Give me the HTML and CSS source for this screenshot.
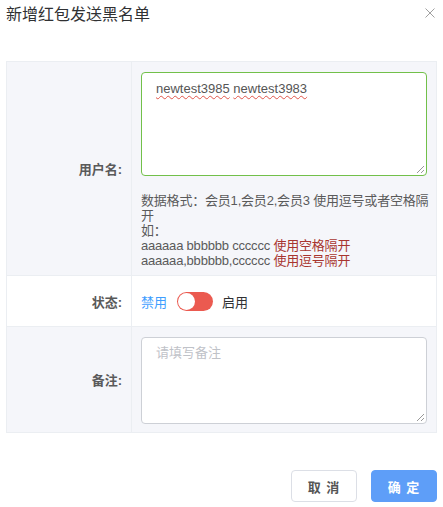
FILE: index.html
```html
<!DOCTYPE html>
<html lang="zh">
<head>
<meta charset="utf-8">
<link rel="stylesheet" href="styles.css">
</head>
<body>
<div class="dialog">
  <div class="header">
    <span class="title">新增红包发送黑名单</span>
    <svg class="close" width="10" height="10" viewBox="0 0 10 10"><path d="M0.5 0.5 L9.5 9.5 M9.5 0.5 L0.5 9.5" stroke="#a0a0a0" stroke-width="1" fill="none"/></svg>
  </div>
  <div class="table">
    <div class="row row-user">
      <div class="label">用户名:</div>
      <div class="cell">
        <div class="textarea focused"><span class="typed">newtest3985</span> <span class="typed">newtest3983</span><span class="grip"></span></div>
        <div class="help">数据格式：会员1,会员2,会员3 使用逗号或者空格隔开<br>如：<br>aaaaaa bbbbbb cccccc <span class="red">使用空格隔开</span><br>aaaaaa,bbbbbb,cccccc <span class="red">使用逗号隔开</span></div>
      </div>
    </div>
    <div class="row row-status">
      <div class="label">状态:</div>
      <div class="cell status">
        <span class="off">禁用</span>
        <span class="switch"><span class="knob"></span></span>
        <span class="on">启用</span>
      </div>
    </div>
    <div class="row row-note">
      <div class="label">备注:</div>
      <div class="cell">
        <div class="textarea note"><span class="ph">请填写备注</span><span class="grip"></span></div>
      </div>
    </div>
  </div>
  <div class="footer">
    <button class="btn cancel">取 消</button>
    <button class="btn ok">确 定</button>
  </div>
</div>
</body>
</html>
```
FILE: styles.css
```css
* { box-sizing: border-box; }
body {
  margin: 0;
  background: #fff;
  font-family: "Liberation Sans", "Noto Sans CJK SC", sans-serif;
  color: #606266;
}
.dialog { padding: 0 6px; }
.header {
  height: 61px;
  display: flex;
  justify-content: space-between;
  align-items: flex-start;
  padding-top: 4px;
}
.title {
  font-size: 16px;
  line-height: 22px;
  color: #303133;
}
.close { margin-top: 4px; margin-right: 2px; }
.table {
  border: 1px solid #ebeef2;
  background: #f5f6fa;
}
.row {
  display: grid;
  grid-template-columns: 125px 1fr;
  border-top: 1px solid #ebeef2;
}
.row:first-child { border-top: 0; }
.label {
  display: flex;
  align-items: center;
  justify-content: flex-end;
  padding-right: 9px;
  font-size: 13px;
  font-weight: bold;
  color: #5a5a5a;
  border-right: 1px solid #ebeef2;
}
.cell { padding: 10px 9px 10px 9px; }
.row-user .cell { padding-bottom: 7px; }
.textarea {
  position: relative;
  background: #fff;
  border: 1px solid #dcdfe6;
  border-radius: 4px;
  padding: 6px 14px;
  font-size: 13px;
  line-height: 20px;
  color: #555;
}
.textarea.focused {
  border-color: #72c04a;
  height: 104px;
}
.typed {
  text-decoration: underline wavy #e0554a;
  text-decoration-thickness: 1px;
  text-underline-offset: 2px;
}
.grip {
  position: absolute;
  right: 2px;
  bottom: 2px;
  width: 7px;
  height: 7px;
  background: linear-gradient(135deg, transparent 45%, #999 45%, #999 55%, transparent 55%, transparent 72%, #999 72%, #999 82%, transparent 82%);
}
.help {
  margin-top: 17px;
  margin-right: -6px;
  font-size: 13px;
  line-height: 15px;
  color: #5a5a5a;
  letter-spacing: -0.2px;
}
.red { color: #a8352f; }
.row-status { background: #fff; }
.status {
  display: flex;
  align-items: center;
  height: 50px;
  font-size: 13px;
}
.off { color: #409eff; }
.on { color: #303133; margin-left: 9px; }
.switch {
  margin-left: 10px;
  width: 36px;
  height: 19px;
  border-radius: 10px;
  background: #eb5a50;
  position: relative;
  display: inline-block;
}
.knob {
  position: absolute;
  left: 1px;
  top: 1px;
  width: 17px;
  height: 17px;
  border-radius: 50%;
  background: #fff;
}
.textarea.note {
  height: 87px;
  padding-top: 5px;
  border-color: #cdd0d6;
}
.ph { color: #bfc2c8; }
.row-note .cell { padding-bottom: 8px; }
.footer {
  display: flex;
  justify-content: flex-end;
  gap: 14px;
  margin-top: 37px;
}
.btn {
  width: 66px;
  height: 32px;
  border-radius: 4px;
  font-family: "Liberation Sans", "Noto Sans CJK SC", sans-serif;
  font-size: 13px;
  font-weight: bold;
  letter-spacing: 1px;
}
.cancel {
  background: #fff;
  border: 1px solid #dcdfe6;
  color: #555;
}
.ok {
  background: #5e9ef8;
  border: 1px solid #5e9ef8;
  color: #fff;
}
```
